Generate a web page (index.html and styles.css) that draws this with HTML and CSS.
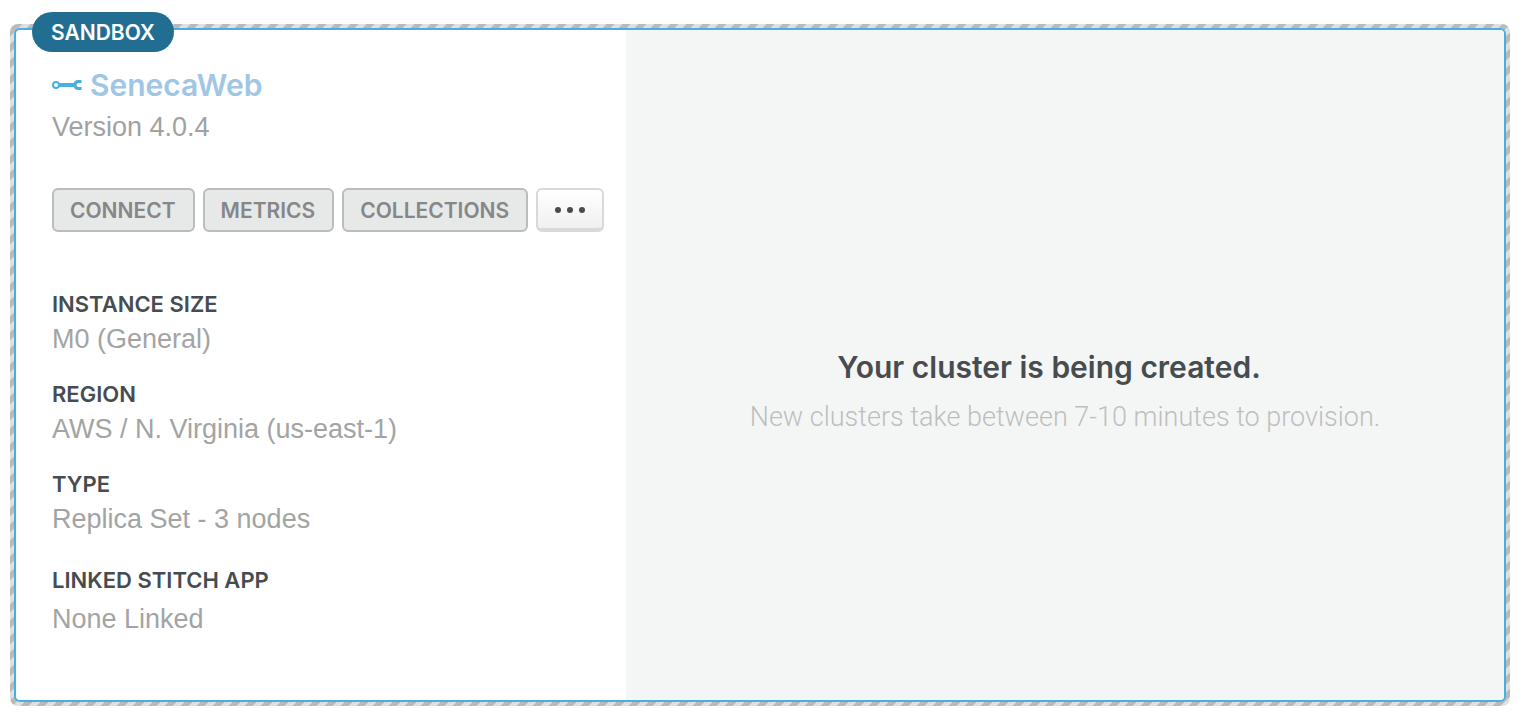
FILE: index.html
```html
<!DOCTYPE html>
<html lang="en">
<head>
<meta charset="utf-8">
<title>Clusters</title>
<link rel="stylesheet" href="styles.css">
</head>
<body>
<main class="cluster">
  <span class="badge">SANDBOX</span>
  <div class="card">
    <section class="summary">
      <h1 class="name">
        <svg class="wrench" viewBox="0 0 30 12" aria-hidden="true">
          <circle cx="4" cy="6" r="3" fill="none" stroke="currentColor" stroke-width="2"/>
          <path d="M7 6H22" fill="none" stroke="currentColor" stroke-width="4"/>
          <path d="M29.500 2.500H26.500C24 2.500 23 4 23 6C23 8 24 9.500 26.500 9.500H29.500" fill="none" stroke="currentColor" stroke-width="3"/>
        </svg>
        <a class="name-link" href="#">SenecaWeb</a>
      </h1>
      <p class="version">Version 4.0.4</p>
      <div class="actions">
        <button class="button" type="button" disabled>CONNECT</button>
        <button class="button" type="button" disabled>METRICS</button>
        <button class="button" type="button" disabled>COLLECTIONS</button>
        <button class="button button-more" type="button" aria-label="More actions">
          <svg class="dots" viewBox="0 0 32 8" aria-hidden="true" fill="currentColor">
            <circle cx="4" cy="4" r="3"/><circle cx="16" cy="4" r="3"/><circle cx="28" cy="4" r="3"/>
          </svg>
        </button>
      </div>
      <dl class="details">
        <div class="detail"><dt>INSTANCE SIZE</dt><dd>M0 (General)</dd></div>
        <div class="detail"><dt>REGION</dt><dd>AWS / N. Virginia (us-east-1)</dd></div>
        <div class="detail"><dt>TYPE</dt><dd>Replica Set - 3 nodes</dd></div>
        <div class="detail detail-app"><dt>LINKED STITCH APP</dt><dd>None Linked</dd></div>
      </dl>
    </section>
    <section class="status">
      <h2 class="status-title">Your cluster is being created.</h2>
      <p class="status-text">New clusters take between 7-10 minutes to provision.</p>
    </section>
  </div>
</main>
</body>
</html>
```
FILE: styles.css
```css
* {
  box-sizing: border-box;
}

body {
  margin: 0;
  padding: 24px 14px 12px 10px;
  background: #fff;
  color: #464c4f;
  font-family: "Liberation Sans", Arial, sans-serif;
  font-size: 27px;
}

h1, h2, p, dl, dd {
  margin: 0;
}

.cluster {
  position: relative;
  padding: 4px;
  border-radius: 8px;
  background: linear-gradient(-45deg, #bababa 25%, #dedfe0 25% 50%, #bababa 50% 75%, #dedfe0 75%) -4px 0 / 16px 16px;
}

.badge {
  position: absolute;
  top: -12px;
  left: 22px;
  padding: 1px 19px 0;
  border-radius: 20px;
  background: #226e92;
  color: #fff;
  font: 600 21px/39px Inter, sans-serif;
}

.card {
  display: flex;
  border: 2px solid #48afdf;
  border-radius: 6px;
  background: #fff;
  overflow: hidden;
}

.summary {
  flex: 0 0 610px;
  padding: 33px 20px 61px 36px;
}

.name {
  display: flex;
  align-items: center;
  gap: 8px;
  font: 600 30px/44px Inter, sans-serif;
}

.name-link {
  color: #a0c6e5;
  text-decoration: none;
}

.wrench {
  width: 30px;
  height: 12px;
  color: #48afe2;
}

.version {
  color: #a0a2a2;
  line-height: 40px;
}

.actions {
  display: flex;
  gap: 8px;
  margin-top: 41px;
}

.button {
  height: 44px;
  padding: 2px 17px 0 16px;
  border: 2px solid #b9bdbc;
  border-radius: 6px;
  background: #e7e9e8;
  color: #858789;
  font: 600 21px/38px Inter, sans-serif;
}

.button-more {
  display: flex;
  align-items: center;
  padding-right: 16px;
  border-color: #d7dadb;
  border-bottom-width: 4px;
  background: linear-gradient(#fff, #f0f0f0);
  color: #464c4f;
}

.dots {
  width: 32px;
  height: 8px;
}

.details {
  display: grid;
  gap: 20px;
  margin-top: 57px;
}

.detail dt {
  font: 600 22px/30px Inter, sans-serif;
}

.detail dd {
  color: #a2a4a4;
  line-height: 40px;
}

.detail-app {
  display: grid;
  gap: 4px;
  padding-top: 6px;
}

.status {
  flex: 1;
  display: flex;
  flex-direction: column;
  align-items: center;
  justify-content: center;
  gap: 8px;
  padding-top: 52px;
  background: #f4f6f5;
  text-align: center;
}

.status-title {
  padding-right: 32px;
  font: 600 30px/44px Inter, sans-serif;
}

.status-text {
  color: #bdbfbf;
  font: 300 27px/40px Roboto, sans-serif;
}
```
